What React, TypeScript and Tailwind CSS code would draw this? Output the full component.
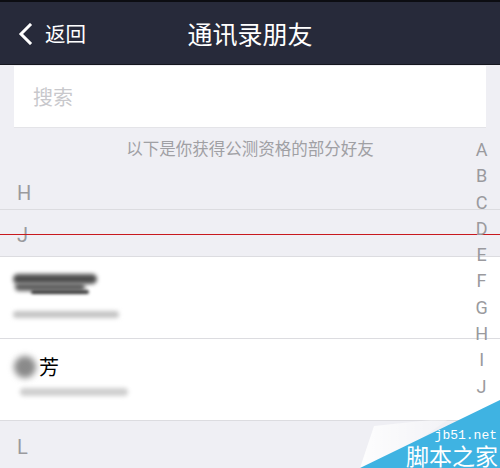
import React from "react";

const letters = ["A", "B", "C", "D", "E", "F", "G", "H", "I", "J"];

export default function App() {
  return (
    <div
      className="relative w-[500px] h-[468px] overflow-hidden bg-[#efeff4] flex flex-col"
      style={{ fontFamily: "Roboto, 'Noto Sans CJK SC', sans-serif" }}
    >
      {/* header */}
      <div className="h-[65px] shrink-0 bg-[#272a3a] border-t-2 border-t-[#0c0d12] border-b border-b-[#15161e] flex items-center relative">
        <div className="flex items-center pl-[18px] text-white">
          <svg width="16" height="22" viewBox="0 0 16 22" className="mt-[1px]">
            <path d="M12 2 L3 11 L12 20" fill="none" stroke="white" strokeWidth="3" strokeLinecap="square" />
          </svg>
          <span className="ml-[11px] text-[20.5px] leading-none" style={{ fontFamily: "'Noto Sans CJK SC', sans-serif" }}>返回</span>
        </div>
        <div className="absolute left-0 right-0 text-center text-white text-[25px] leading-none pointer-events-none" style={{ fontFamily: "'Noto Sans CJK SC', sans-serif" }}>
          通讯录朋友
        </div>
      </div>

      {/* search */}
      <div className="px-[14px] pt-[1px] shrink-0">
        <div className="h-[62px] bg-white flex items-center pl-[19px] border-b border-[#e4e4e8]">
          <span className="text-[20px] text-[#c8c8cc]" style={{ fontFamily: "'Noto Sans CJK SC', sans-serif" }}>搜索</span>
        </div>
      </div>

      <div className="h-[46px] shrink-0 flex items-start pt-[12px] justify-center text-[16.5px] leading-none text-[#a0a0a4]" style={{ fontFamily: "'Noto Sans CJK SC', sans-serif" }}>
        以下是你获得公测资格的部分好友
      </div>

      {/* H section */}
      <div className="h-[36px] shrink-0 flex items-start pl-[17px] text-[20px] text-[#9a9a9e] border-b border-[#dcdce0] leading-none">
        <span className="mt-[9px]">H</span>
      </div>
      <div className="h-[47px] shrink-0 flex items-center pl-[17px] text-[20px] text-[#9a9a9e] border-b border-[#dcdce0] leading-none">
        <span className="mt-[4px]">J</span>
      </div>

      {/* row 1 */}
      <div className="h-[82px] shrink-0 bg-white border-b border-[#dcdce0] flex flex-col pl-[13px] pt-[15px] gap-[15px]">
        <div className="relative w-[86px] h-[24px]">
          <div className="absolute left-0 top-[2px] w-[84px] h-[10px] bg-[#4e4e4e] rounded-full blur-[2px]" />
          <div className="absolute left-[2px] top-[11px] w-[70px] h-[8px] bg-[#5e5e5e] rounded-full blur-[2px]" />
          <div className="absolute left-[18px] top-[18px] w-[58px] h-[4px] bg-[#3e3e3e] rounded-full blur-[1.5px]" />
        </div>
        <div className="w-[106px] h-[7px] bg-[#c4c4c4] rounded-full blur-[2px]" />
      </div>

      {/* row 2 */}
      <div className="h-[82px] shrink-0 bg-white border-b border-[#dcdce0] flex flex-col pl-[14px] pt-[16px] gap-[9px]">
        <div className="flex items-center h-[24px]">
          <div className="w-[22px] h-[22px] rounded-full bg-[#8a8a8a] blur-[3px]" />
          <span className="text-[20px] text-black leading-none ml-[3px]" style={{ fontFamily: "'Noto Sans CJK SC', sans-serif" }}>芳</span>
        </div>
        <div className="ml-[6px] w-[108px] h-[8px] bg-[#cfcfcf] rounded-full blur-[2px]" />
      </div>

      {/* L section */}
      <div className="flex-1 flex items-center pl-[17px] text-[20px] text-[#9a9a9e] leading-none">
        <span className="mt-[4px]">L</span>
      </div>

      {/* red line */}
      <div className="absolute left-0 right-0 top-[234px] h-[1px] bg-[#c8191e]" />

      {/* index */}
      <div className="absolute right-[12px] top-[137px] flex flex-col items-center text-[18px] text-[#9a9a9e] leading-[26.3px]">
        {letters.map((l) => (
          <span key={l}>{l}</span>
        ))}
      </div>

      {/* watermark */}
      <svg className="absolute right-0 bottom-0" width="160" height="90" viewBox="0 0 160 90">
        <defs>
          <linearGradient id="wm" x1="0" y1="0" x2="1" y2="0">
            <stop offset="0" stopColor="#ffffff" stopOpacity="0.9" />
            <stop offset="1" stopColor="#ffffff" stopOpacity="0.2" />
          </linearGradient>
        </defs>
        <polygon points="20,90 34,48 110,40 40,90" fill="url(#wm)" />
        <polygon points="160,22 160,90 20,90" fill="#3fb3e2" />
      </svg>
      <div className="absolute right-[3px] top-[429px] text-white text-[13px] leading-none" style={{ fontFamily: "'Liberation Mono', monospace" }}>
        jb51.net
      </div>
      <div className="absolute right-[2px] top-[443px] text-white text-[23px] leading-[24px]" style={{ fontFamily: "'Noto Sans CJK SC', sans-serif" }}>
        脚本之家
      </div>
    </div>
  );
}
